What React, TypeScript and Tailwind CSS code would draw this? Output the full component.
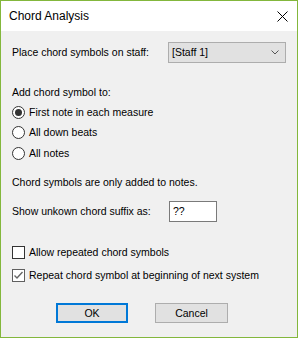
import React from "react";

const font = { fontFamily: '"Liberation Sans", Arial, sans-serif' };

function Radio({ checked, label }: { checked?: boolean; label: string }) {
  return (
    <div className="flex items-center h-full">
      <div className="w-[13px] h-[13px] rounded-full border border-[#333333] bg-white flex items-center justify-center">
        {checked && <div className="w-[7px] h-[7px] rounded-full bg-[#333333]" />}
      </div>
      <span className="ml-[4px]">{label}</span>
    </div>
  );
}

function Check({ checked, label }: { checked?: boolean; label: string }) {
  return (
    <div className="flex items-center h-full">
      <div
        className={
          "w-[13px] h-[13px] border bg-white flex items-center justify-center " +
          (checked ? "border-[#606060]" : "border-[#333333]")
        }
      >
        {checked && (
          <svg width="11" height="11" viewBox="0 0 11 11">
            <path d="M1.5 5.5 L4 8 L9.5 2" fill="none" stroke="#666666" strokeWidth="1.4" />
          </svg>
        )}
      </div>
      <span className="ml-[4px]">{label}</span>
    </div>
  );
}

export default function App() {
  return (
    <div
      className="w-[298px] h-[338px] border border-[#83b73c] flex flex-col text-[10.5px] text-black leading-none"
      style={font}
    >
      <div className="h-[30px] bg-white flex items-center justify-between pl-[8px] pr-[9px]">
        <span className="text-[12px]">Chord Analysis</span>
        <svg width="11" height="11" viewBox="0 0 11 11">
          <path d="M0.5 0.5 L10.5 10.5 M10.5 0.5 L0.5 10.5" stroke="#000" strokeWidth="1" />
        </svg>
      </div>
      <div className="flex-1 bg-[#f0f0f0] flex flex-col pl-[11px] pr-[10px]">
        <div className="mt-[11px] h-[21px] flex items-center">
          <span className="w-[156px]">Place chord symbols on staff:</span>
          <div className="w-[118px] h-[21px] bg-[#e1e1e1] border border-[#adadad] flex items-center justify-between pl-[3px] pr-[6px]">
            <span>[Staff 1]</span>
            <svg width="8" height="5" viewBox="0 0 8 5">
              <path d="M0.5 0.5 L4 4 L7.5 0.5" fill="none" stroke="#555" strokeWidth="1" />
            </svg>
          </div>
        </div>
        <div className="mt-[21px] h-[16px] flex items-center">Add chord symbol to:</div>
        <div className="mt-[2px] h-[20px]">
          <Radio checked label="First note in each measure" />
        </div>
        <div className="h-[21px]">
          <Radio label="All down beats" />
        </div>
        <div className="h-[20px]">
          <Radio label="All notes" />
        </div>
        <div className="mt-[11px] h-[16px] flex items-center">Chord symbols are only added to notes.</div>
        <div className="mt-[11px] h-[21px] flex items-center">
          <span className="w-[157px]">Show unkown chord suffix as:</span>
          <div className="w-[48px] h-[21px] bg-white border border-[#7a7a7a] flex items-center pl-[3px]">??</div>
        </div>
        <div className="mt-[20px] h-[20px]">
          <Check label="Allow repeated chord symbols" />
        </div>
        <div className="mt-[3px] h-[20px]">
          <Check checked label="Repeat chord symbol at beginning of next system" />
        </div>
        <div className="mt-[18px] flex pl-[44px]">
          <div className="w-[72px] h-[20px] bg-[#e1e1e1] border-2 border-[#0078d7] flex items-center justify-center">OK</div>
          <div className="ml-[27px] w-[73px] h-[20px] bg-[#e1e1e1] border border-[#adadad] flex items-center justify-center">Cancel</div>
        </div>
      </div>
    </div>
  );
}
